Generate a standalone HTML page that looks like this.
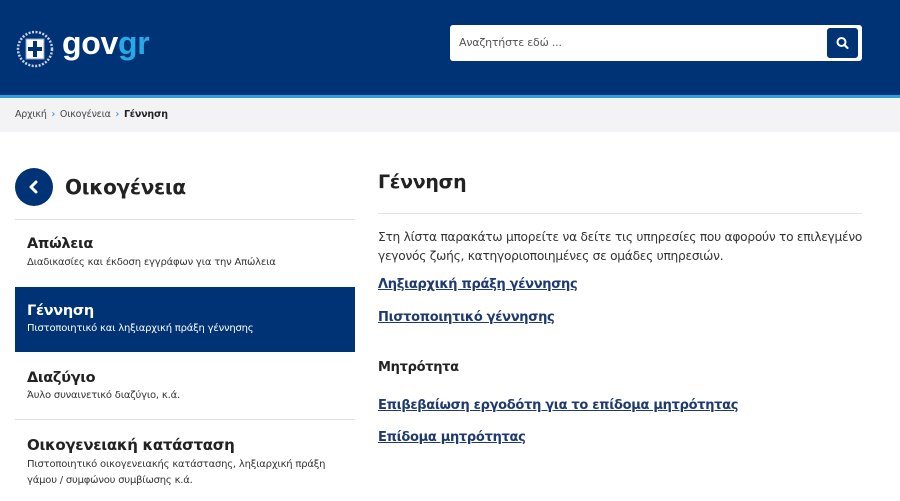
<!DOCTYPE html>
<html><head><meta charset="utf-8">
<style>
*{margin:0;padding:0;box-sizing:border-box}
body{width:900px;height:501px;overflow:hidden;background:#fff;font-family:"DejaVu Sans","Liberation Sans",sans-serif;color:#1a1a1a}
.hdr{position:absolute;left:0;top:0;width:900px;height:95px;background:#003375}
.stripe{position:absolute;left:0;top:95px;width:900px;height:3px;background:#2a9fd8}
.bc{position:absolute;left:0;top:98px;width:900px;height:34px;background:#f3f3f5;font-size:9.5px;color:#444;padding:11px 0 0 15px;letter-spacing:-0.2px}
.bc .s{color:#2a7fc0;margin:0 2px}
.logo{position:absolute;left:62px;top:25px;font-family:"Liberation Sans",sans-serif;font-weight:bold;font-size:32px;color:#fff;letter-spacing:-0.3px}
.logo span{color:#2aa8e6}
.search{position:absolute;left:450px;top:25px;width:412px;height:36px;background:#fff;border-radius:3px}
.search .ph{position:absolute;left:9px;top:11px;font-size:11px;color:#555;letter-spacing:-0.2px}
.search .btn{position:absolute;left:377px;top:3px;width:31px;height:30px;background:#003375;border-radius:3px}
.circ{position:absolute;left:15px;top:168px;width:38px;height:38px;border-radius:50%;background:#003375}
.abs{position:absolute;white-space:nowrap}
.t{font-weight:bold;font-size:14.5px;color:#222;letter-spacing:-0.3px}
.st{font-size:10px;color:#333;letter-spacing:-0.2px}
.line{position:absolute;height:1px;background:#e2e2e2}
.lnk{font-weight:bold;font-size:13px;color:#1e3a6e;text-decoration:underline;letter-spacing:-0.3px}
</style></head><body>
<div class="hdr"></div>
<div class="stripe"></div>
<svg class="abs" style="left:16px;top:29px" width="38" height="40" viewBox="0 0 38 40">
<circle cx="19" cy="20" r="17" fill="none" stroke="#c9d3e4" stroke-width="2.5" stroke-dasharray="2 1.5"/>
<rect x="10" y="10" width="18" height="20" rx="1" fill="#fff"/>
<rect x="10" y="10" width="18" height="20" fill="none" stroke="#8aa0c4" stroke-width="1"/>
<rect x="17" y="12" width="4" height="16" fill="#003375"/>
<rect x="12" y="18" width="14" height="4" fill="#003375"/>
</svg>
<div class="logo">gov<span>gr</span></div>
<div class="search"><div class="ph">Αναζητήστε εδώ ...</div>
<div class="btn"><svg width="31" height="30" viewBox="0 0 31 30"><circle cx="14.5" cy="14" r="4" fill="none" stroke="#fff" stroke-width="2"/><line x1="17.5" y1="17" x2="20.5" y2="20" stroke="#fff" stroke-width="2.2" stroke-linecap="round"/></svg></div></div>
<div class="bc">Αρχική <span class="s">›</span> Οικογένεια <span class="s">›</span> <b style="color:#222">Γέννηση</b></div>

<div class="circ"><svg width="38" height="38" viewBox="0 0 38 38"><path d="M21 14 L16 19 L21 24" fill="none" stroke="#fff" stroke-width="3" stroke-linecap="round" stroke-linejoin="round"/></svg></div>
<div class="abs" style="left:65px;top:175px;font-size:20px;font-weight:bold;color:#222;letter-spacing:-0.3px">Οικογένεια</div>
<div class="line" style="left:15px;top:219px;width:340px"></div>
<div class="abs t" style="left:27px;top:236px">Απώλεια</div>
<div class="abs st" style="left:27px;top:257px">Διαδικασίες και έκδοση εγγράφων για την Απώλεια</div>
<div class="abs" style="left:15px;top:287px;width:340px;height:65px;background:#003375"></div>
<div class="abs t" style="left:27px;top:303px;color:#fff">Γέννηση</div>
<div class="abs st" style="left:27px;top:323px;color:#fff">Πιστοποιητικό και ληξιαρχική πράξη γέννησης</div>
<div class="abs t" style="left:27px;top:370px">Διαζύγιο</div>
<div class="abs st" style="left:27px;top:390px">Άυλο συναινετικό διαζύγιο, κ.ά.</div>
<div class="line" style="left:15px;top:419px;width:340px"></div>
<div class="abs t" style="left:27px;top:436px;font-size:15px">Οικογενειακή κατάσταση</div>
<div class="abs st" style="left:27px;top:457px;line-height:16px">Πιστοποιητικό οικογενειακής κατάστασης, ληξιαρχική πράξη<br>γάμου / συμφώνου συμβίωσης κ.ά.</div>

<div class="abs" style="left:378px;top:171px;font-size:19px;font-weight:bold;color:#222;letter-spacing:-0.3px">Γέννηση</div>
<div class="line" style="left:378px;top:213px;width:484px"></div>
<div class="abs" style="left:378px;top:228px;font-size:12.2px;color:#333;line-height:19px;letter-spacing:-0.25px">Στη λίστα παρακάτω μπορείτε να δείτε τις υπηρεσίες που αφορούν το επιλεγμένο<br>γεγονός ζωής, κατηγοριοποιημένες σε ομάδες υπηρεσιών.</div>
<div class="abs lnk" style="left:378px;top:277px">Ληξιαρχική πράξη γέννησης</div>
<div class="abs lnk" style="left:378px;top:310px">Πιστοποιητικό γέννησης</div>
<div class="abs" style="left:378px;top:360px;font-size:13px;font-weight:bold;color:#222;letter-spacing:-0.3px">Μητρότητα</div>
<div class="abs lnk" style="left:378px;top:398px">Επιβεβαίωση εργοδότη για το επίδομα μητρότητας</div>
<div class="abs lnk" style="left:378px;top:430px">Επίδομα μητρότητας</div>
</body></html>
